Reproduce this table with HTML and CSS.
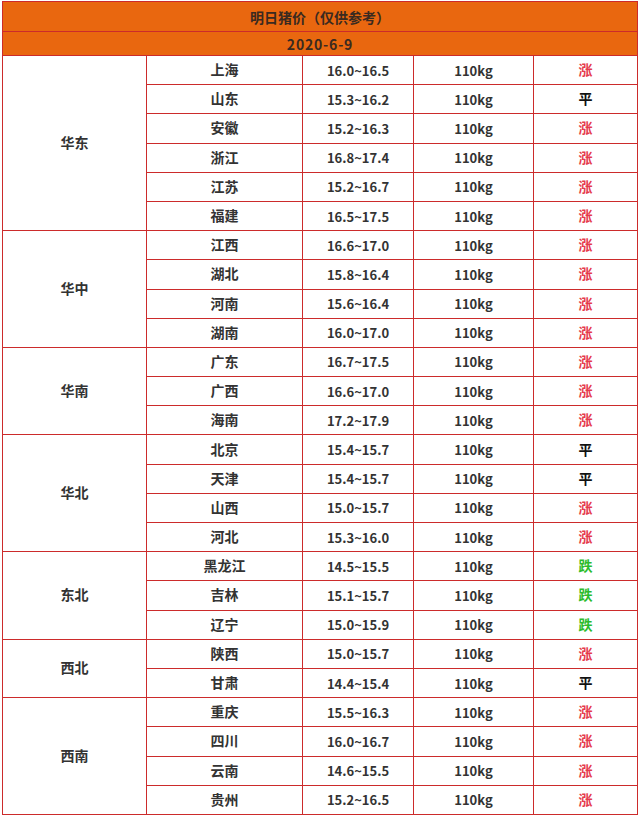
FILE: index.html
```html
<!DOCTYPE html>
<html lang="zh-CN">
<head>
<meta charset="utf-8">
<title>明日猪价</title>
<link rel="stylesheet" href="styles.css">
</head>
<body>
<table class="price">
  <colgroup>
    <col class="c-region"><col class="c-prov"><col class="c-price"><col class="c-weight"><col class="c-trend">
  </colgroup>
  <thead>
    <tr class="h1"><th colspan="5">明日猪价（仅供参考）</th></tr>
    <tr class="h2"><th colspan="5">2020-6-9</th></tr>
  </thead>
  <tbody>
    <tr><td class="cn" rowspan="6">华东</td><td class="cn">上海</td><td>16.0~16.5</td><td>110kg</td><td class="cn up">涨</td></tr>
    <tr><td class="cn">山东</td><td>15.3~16.2</td><td>110kg</td><td class="cn flat">平</td></tr>
    <tr><td class="cn">安徽</td><td>15.2~16.3</td><td>110kg</td><td class="cn up">涨</td></tr>
    <tr><td class="cn">浙江</td><td>16.8~17.4</td><td>110kg</td><td class="cn up">涨</td></tr>
    <tr><td class="cn">江苏</td><td>15.2~16.7</td><td>110kg</td><td class="cn up">涨</td></tr>
    <tr><td class="cn">福建</td><td>16.5~17.5</td><td>110kg</td><td class="cn up">涨</td></tr>
    <tr><td class="cn" rowspan="4">华中</td><td class="cn">江西</td><td>16.6~17.0</td><td>110kg</td><td class="cn up">涨</td></tr>
    <tr><td class="cn">湖北</td><td>15.8~16.4</td><td>110kg</td><td class="cn up">涨</td></tr>
    <tr><td class="cn">河南</td><td>15.6~16.4</td><td>110kg</td><td class="cn up">涨</td></tr>
    <tr><td class="cn">湖南</td><td>16.0~17.0</td><td>110kg</td><td class="cn up">涨</td></tr>
    <tr><td class="cn" rowspan="3">华南</td><td class="cn">广东</td><td>16.7~17.5</td><td>110kg</td><td class="cn up">涨</td></tr>
    <tr><td class="cn">广西</td><td>16.6~17.0</td><td>110kg</td><td class="cn up">涨</td></tr>
    <tr><td class="cn">海南</td><td>17.2~17.9</td><td>110kg</td><td class="cn up">涨</td></tr>
    <tr><td class="cn" rowspan="4">华北</td><td class="cn">北京</td><td>15.4~15.7</td><td>110kg</td><td class="cn flat">平</td></tr>
    <tr><td class="cn">天津</td><td>15.4~15.7</td><td>110kg</td><td class="cn flat">平</td></tr>
    <tr><td class="cn">山西</td><td>15.0~15.7</td><td>110kg</td><td class="cn up">涨</td></tr>
    <tr><td class="cn">河北</td><td>15.3~16.0</td><td>110kg</td><td class="cn up">涨</td></tr>
    <tr><td class="cn" rowspan="3">东北</td><td class="cn">黑龙江</td><td>14.5~15.5</td><td>110kg</td><td class="cn down">跌</td></tr>
    <tr><td class="cn">吉林</td><td>15.1~15.7</td><td>110kg</td><td class="cn down">跌</td></tr>
    <tr><td class="cn">辽宁</td><td>15.0~15.9</td><td>110kg</td><td class="cn down">跌</td></tr>
    <tr><td class="cn" rowspan="2">西北</td><td class="cn">陕西</td><td>15.0~15.7</td><td>110kg</td><td class="cn up">涨</td></tr>
    <tr><td class="cn">甘肃</td><td>14.4~15.4</td><td>110kg</td><td class="cn flat">平</td></tr>
    <tr><td class="cn" rowspan="4">西南</td><td class="cn">重庆</td><td>15.5~16.3</td><td>110kg</td><td class="cn up">涨</td></tr>
    <tr><td class="cn">四川</td><td>16.0~16.7</td><td>110kg</td><td class="cn up">涨</td></tr>
    <tr><td class="cn">云南</td><td>14.6~15.5</td><td>110kg</td><td class="cn up">涨</td></tr>
    <tr><td class="cn">贵州</td><td>15.2~16.5</td><td>110kg</td><td class="cn up">涨</td></tr>
  </tbody>
</table>
</body>
</html>
```
FILE: styles.css
```css
html, body {
  margin: 0;
  padding: 0;
  background: #ffffff;
}

body {
  padding: 1px 0 0 2px;
  font-family: "Noto Sans CJK SC", "Noto Sans", sans-serif;
  font-weight: bold;
  font-size: 13px;
  color: #333333;
}

.price {
  border-collapse: collapse;
  table-layout: fixed;
  width: 635px;
}

.c-region { width: 144px; }
.c-prov { width: 156px; }
.c-price { width: 111px; }
.c-weight { width: 120px; }
.c-trend { width: 104px; }

.price th,
.price td {
  border: 1px solid #cc2b2b;
  padding: 0;
  text-align: center;
  vertical-align: middle;
  line-height: 1;
}

.price th {
  background: #e9670f;
  color: #3a2a20;
  font-weight: bold;
  font-size: 14px;
}

.h1 { height: 30px; }
.h2 { height: 24px; }
.h2 th { letter-spacing: 0.8px; }

.price tbody tr { height: 29.2px; }

.price td.cn {
  font-size: 14px;
  padding-bottom: 2px;
}

.up { color: #e53a4c; }
.down { color: #2cbc2c; }
.flat { color: #111111; }
```
